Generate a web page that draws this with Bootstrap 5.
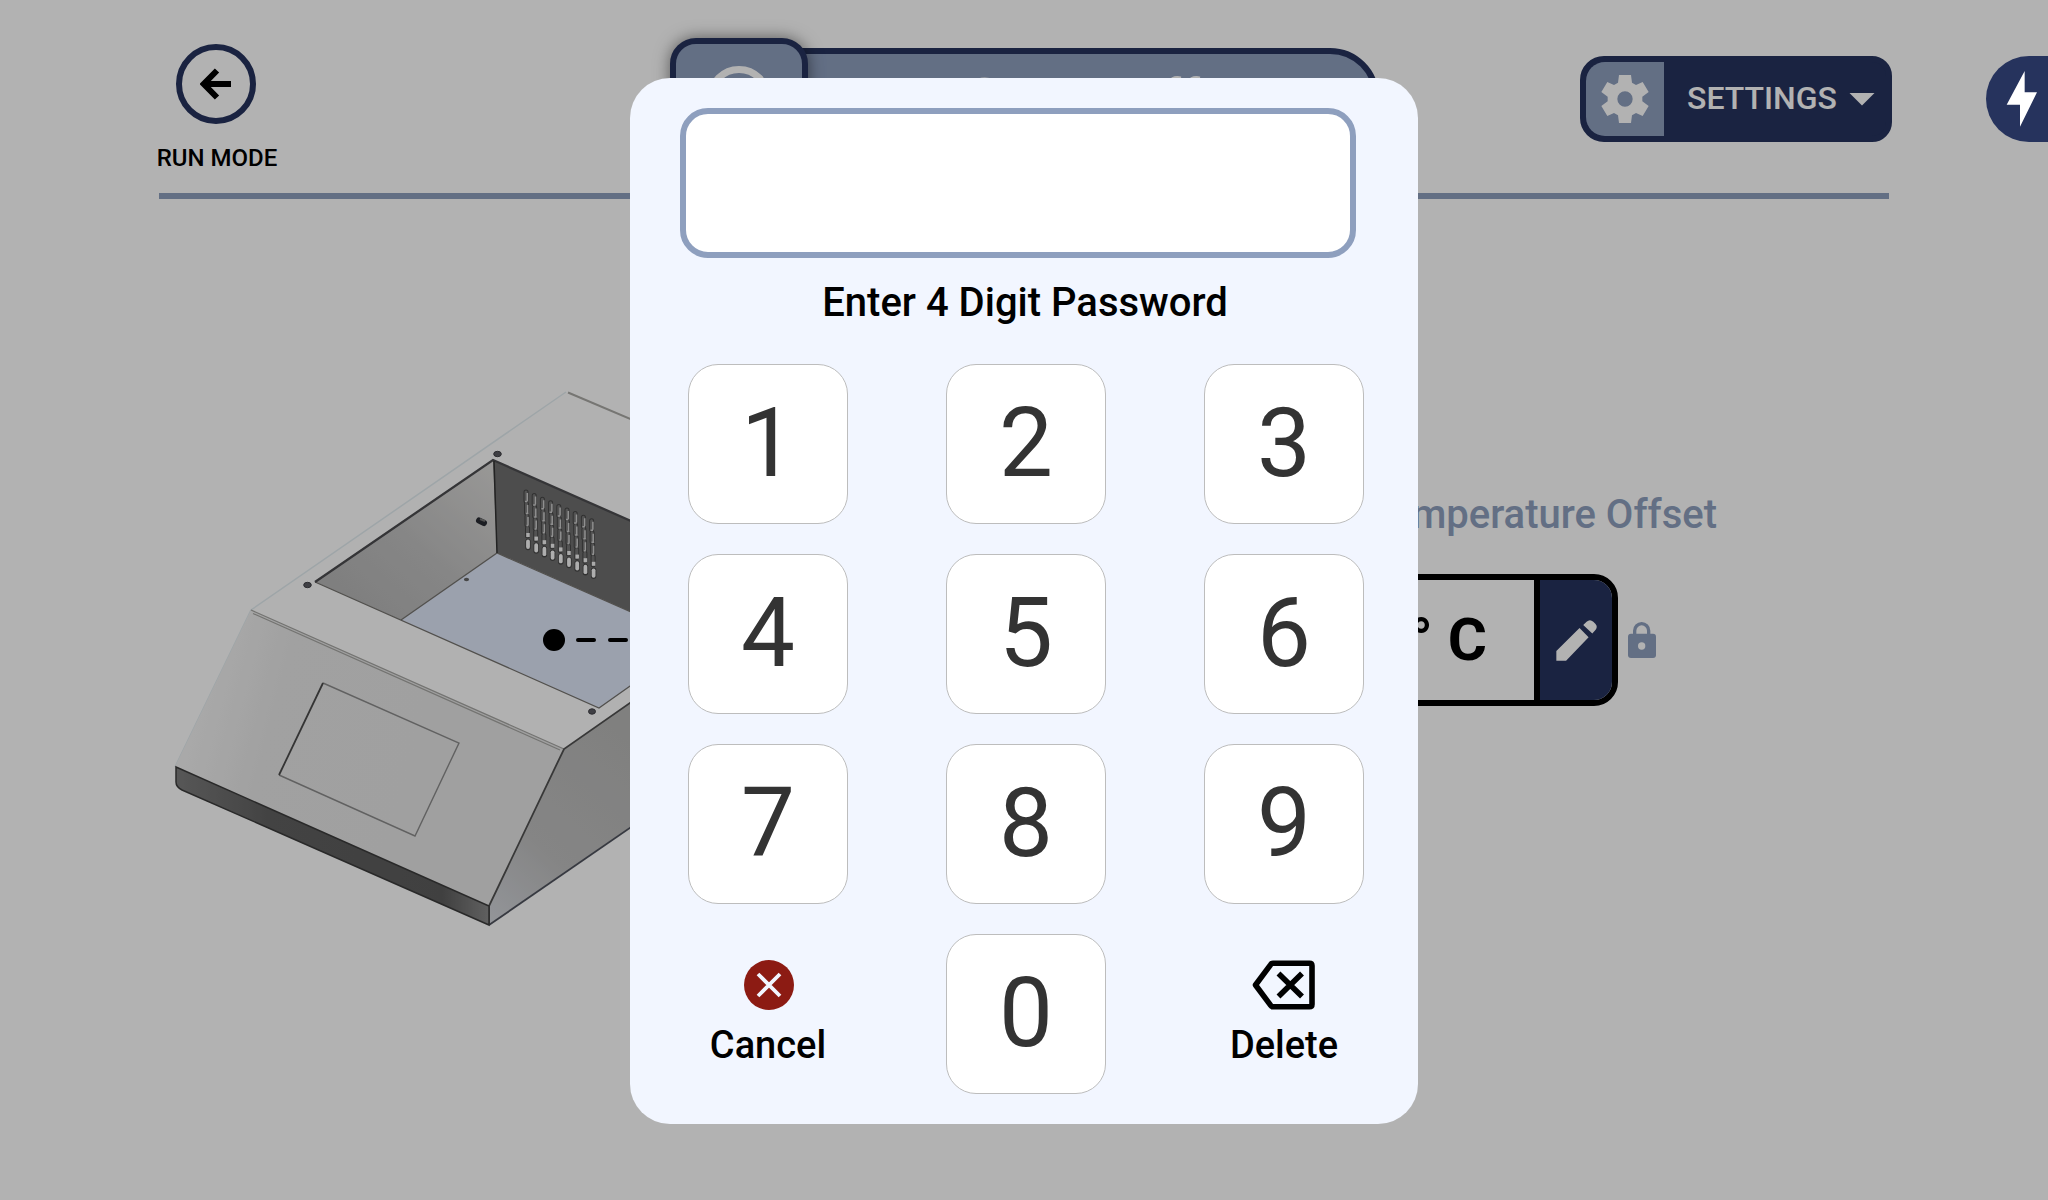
<!DOCTYPE html>
<html lang="en">
<head>
<meta charset="utf-8">
<meta name="viewport" content="width=device-width, initial-scale=1">
<title>Temperature Offset</title>
<link href="https://cdn.jsdelivr.net/npm/bootstrap@5.3.0/dist/css/bootstrap.min.css" rel="stylesheet">
<style>
  :root { --navy: #26335d; --slate: #8e9fbe; --panel: #f2f6ff; }
  body { font-family: Roboto, "Liberation Sans", sans-serif; color: #000; background: #fff; width: 2048px; height: 1200px; font-weight: 500; }
  svg { display: block; flex: none; }
  .topbar { margin: 0 159px; height: 199px; border-bottom: 6px solid var(--slate); }
  .run-mode { width: 120px; margin: 44px 0 0 -3px; }
  .run-ring { width: 80px; height: 80px; border: 6px solid var(--navy); }
  .run-label { font-size: 24px; line-height: 28px; margin: 20px 0 0 2px; white-space: nowrap; }
  .title-group { margin: 38px 0 0 394px; width: 709px; }
  .title-tab { width: 138px; height: 118px; border: 6px solid var(--navy); border-radius: 26px; background: var(--slate); box-shadow: 0 0 16px rgba(0,0,0,.5); z-index: 1; padding-top: 22px; }
  .title-pill { height: 98px; margin: 10px 0 0 -40px; border: 6px solid var(--navy); border-radius: 0 49px 49px 0; background: var(--slate); color: #fff; line-height: 60px; padding: 15px 0 0 191px; }
  .title-initial { font-size: 58px; width: 38px; }
  .title-tail { font-size: 54px; margin-left: 159px; }
  .settings { width: 312px; height: 86px; margin: 56px -3px 0 auto; background: var(--navy); border: 6px solid var(--navy); border-radius: 24px 20px 20px 24px; color: #fff; font-size: 32px; line-height: 38px; }
  .settings-icon { width: 78px; height: 74px; background: var(--slate); border-radius: 19px 0 0 19px; }
  .settings-label { margin: 0 12px 0 23px; padding-bottom: 2px; }
  .device { margin: 181px 0 0 160px; }
  .reading { margin: 292px 0 0 700px; }
  .reading-title { width: 377px; font-size: 40px; line-height: 48px; color: var(--slate); text-align: right; white-space: nowrap; }
  .reading-row { margin-top: 35px; gap: 10px; }
  .value-box { width: 278px; height: 132px; border: 6px solid #000; border-radius: 24px; overflow: hidden; }
  .value-text { font-size: 60px; font-weight: 700; padding-right: 47px; white-space: pre; }
  .value-edit { width: 78px; border-left: 6px solid #000; background: var(--navy); }
  .shade { background: rgba(0,0,0,.3); padding-top: 78px; z-index: 1050; }
  .keypad { width: 788px; height: 1046px; background: var(--panel); border-radius: 40px; padding: 30px 54px 30px 58px; }
  .pin-box { width: 676px; height: 150px; margin-left: -8px; border: 6px solid var(--slate); border-radius: 28px; background: #fff; }
  .prompt { font-size: 40px; line-height: 48px; margin: 21px 0 37px -2px; }
  .keys { display: grid; grid-template-columns: repeat(3, 160px); grid-auto-rows: 160px; gap: 30px 98px; }
  .key { background: #fff; border: 1px solid #bdbdbd; border-radius: 30px; padding: 0 0 2px; color: #333; font-size: 96px; font-weight: 400; line-height: 156px; }
  .action { border: 0; background: none; padding: 26px 0 0; color: #000; font-size: 38px; font-weight: 500; line-height: 44px; }
  .action svg { margin-bottom: 13px; }
  .bolt-tab { top: 56px; right: 0; width: 62px; height: 86px; background: var(--navy); border-radius: 43px 0 0 43px; z-index: 1060; }
</style>
</head>
<body class="overflow-hidden position-relative">

<header class="topbar d-flex align-items-start">
  <div class="run-mode d-flex flex-column align-items-center">
    <div class="run-ring rounded-circle d-flex align-items-center justify-content-center">
      <svg width="32" height="32" viewBox="0 0 32 32" fill="none" stroke="#000" stroke-width="6"><path d="M31 16H5M17 2.500 3.800 16 17 29.500"/></svg>
    </div>
    <div class="run-label">RUN MODE</div>
  </div>
  <div class="title-group d-flex align-items-start">
    <div class="title-tab position-relative flex-shrink-0 d-flex justify-content-center">
      <svg width="64" height="64" viewBox="0 0 64 64" fill="none" stroke="#fff" stroke-width="7"><circle cx="32" cy="32" r="28.500"/></svg>
    </div>
    <div class="title-pill flex-grow-1 d-flex align-items-start"><span class="title-initial">C</span><span class="title-tail">ff</span></div>
  </div>
  <div class="settings d-flex align-items-center">
    <div class="settings-icon d-flex align-items-center justify-content-center">
      <svg width="48" height="48" viewBox="-72 -72 144 144"><path fill="#fff" fill-rule="evenodd" d="M-18-72H18L21-49 33-42 53-51 71-21 52-7V7L71 21 53 51 33 42 21 49 18 72H-18L-21 49-33 42-53 51-71 21-52 7V-7L-71-21-53-51-33-42-21-49ZM0-23A23 23 0 1 0 0 23A23 23 0 1 0 0-23Z"/></svg>
    </div>
    <span class="settings-label">SETTINGS</span>
    <svg width="26" height="13" viewBox="0 0 26 13"><path fill="#fff" d="M.5 0h25L13 12.500z"/></svg>
  </div>
</header>

<main class="d-flex align-items-start">
  <svg class="device" width="480" height="560" viewBox="160 380 480 560">
    <defs>
      <linearGradient id="wall" x1="0" y1="1" x2="1" y2="0"><stop offset="0" stop-color="#b2b2b2"/><stop offset=".5" stop-color="#c0c0c0"/><stop offset="1" stop-color="#dcdbd9"/></linearGradient>
      <linearGradient id="face" x1="0" y1=".3" x2="1" y2=".5"><stop offset="0" stop-color="#f6f6f6"/><stop offset=".25" stop-color="#e7e7e7"/><stop offset="1" stop-color="#e5e5e5"/></linearGradient>
      <linearGradient id="side" x1="0" y1="1" x2=".6" y2="0"><stop offset="0" stop-color="#d3d6dc"/><stop offset=".4" stop-color="#bfbfbf"/><stop offset="1" stop-color="#b8b8b7"/></linearGradient>
      <linearGradient id="base"><stop offset="0" stop-color="#7d7d7d"/><stop offset=".3" stop-color="#606060"/><stop offset=".85" stop-color="#5c5c5c"/><stop offset="1" stop-color="#8a8a8a"/></linearGradient>
      <g id="vents">
        <path d="M526 492v9M526.500 504v9M527 516v9M527.500 528v8" stroke="#474747" stroke-width="5" stroke-linecap="round"/>
        <path d="M526 492v9M526.500 504v9M527 516v9M527.500 528v8" stroke="#777" stroke-width="3" stroke-linecap="round"/>
        <path d="M527.300 493v8M525 501.500h2.500M527.600 505v8M526 513.500h2.500M528 517v8M526.500 525.500h2" stroke="#cfcfcf" stroke-width="1.500"/>
        <path d="M528 533v4" stroke="#f4f4f4" stroke-width="3.500"/>
        <path d="M528 541.500v6" stroke="#474747" stroke-width="5.500" stroke-linecap="round"/>
        <path d="M528 541.500v5.500" stroke="#fafafa" stroke-width="3.800" stroke-linecap="round"/>
      </g>
    </defs>
    <path fill="#fefefe" d="M566 392 251 610 564 749 640 697V423z"/>
    <path fill="none" stroke="#e3edf1" stroke-width="1.500" d="M566 392 251 610 175 767"/>
    <path fill="none" stroke="#aaa9a5" stroke-width="2" d="M568 392.500 640 423"/>
    <path fill="url(#wall)" d="M315 582 493 460 497 553 401 620z"/>
    <path fill="#6f6f6f" d="M493 460 640 525V616L497 553z"/>
    <path fill="#dfe7f8" d="M401 620 497 553 640 616V680L599 708z"/>
    <path fill="none" stroke="#75736f" stroke-width="1.300" d="M401 620 497 553 640 616M315 582 599 708 640 679"/>
    <path fill="none" stroke="#4c4c50" stroke-width="2.300" d="M315 582 493 460 640 525"/>
    <path stroke="#333" stroke-width="1.500" d="M494 461 497 553"/>
    <use href="#vents"/><use href="#vents" x="8.200" y="3.600"/><use href="#vents" x="16.400" y="7.200"/><use href="#vents" x="24.600" y="10.800"/><use href="#vents" x="32.800" y="14.400"/><use href="#vents" x="41" y="18"/><use href="#vents" x="49.200" y="21.600"/><use href="#vents" x="57.400" y="25.200"/><use href="#vents" x="65.600" y="28.800"/>
    <path stroke="#292b33" stroke-width="6" stroke-linecap="round" d="M479 520.500 484 523"/><path stroke="#777" stroke-width="2" d="M480 519 485 521"/>
    <ellipse cx="466.500" cy="579.500" rx="2.600" ry="1.800" fill="#666"/>
    <g fill="#5b5b62" stroke="#404046"><ellipse cx="497.500" cy="454" rx="3.800" ry="2.700"/><ellipse cx="307.500" cy="585" rx="3.800" ry="2.700"/><ellipse cx="592" cy="711.500" rx="3.500" ry="2.700"/></g>
    <path fill="url(#face)" d="M251 610 564 749 489 906 175 767z"/>
    <path fill="none" stroke="#a6a6a3" stroke-width="1.200" d="M251 610 564 749M253 613.500 560 750"/>
    <path fill="url(#side)" d="M564 749 640 696V821L489 925V906z"/>
    <path fill="none" stroke="#515151" stroke-width="1.800" d="M640 696 564 749 489 906V924"/>
    <path fill="none" stroke="#50535e" stroke-width="1.800" d="M489 925 640 821"/>
    <path fill="url(#base)" stroke="#3c3c3c" stroke-width="1.500" d="M176 767 489 906V925L182 790Q176 787 176 782z"/>
    <path fill="none" stroke="#8c8c8c" stroke-width="1.400" d="M323 683 459 743 415 836 279 775"/>
    <path stroke="#4b4b4b" stroke-width="1.800" d="M323 683 279 775"/>
    <circle cx="554" cy="640" r="11"/>
    <path stroke="#000" stroke-width="4" stroke-linecap="round" d="M578 640h16M610 640h16"/>
  </svg>

  <section class="reading">
    <div class="reading-title">Temperature Offset</div>
    <div class="reading-row d-flex align-items-center">
      <div class="value-box d-flex">
        <div class="value-text flex-grow-1 d-flex align-items-center justify-content-end">° C</div>
        <div class="value-edit d-flex align-items-center justify-content-center">
          <svg width="41" height="41" viewBox="527 419 122 122"><path fill="#fff" d="M528 540V511L597 443 624 470 557 540zM608 434 618 424Q628 415 638 424L644 430Q652 438 645 448L635 459z"/></svg>
        </div>
      </div>
      <svg width="28" height="36" viewBox="744 426 84 108"><rect x="744" y="461" width="84" height="73" rx="9" fill="#8e9fbe"/><path d="M764 463V452a21 21 0 0 1 42 0V463" fill="none" stroke="#8e9fbe" stroke-width="10"/><circle cx="785" cy="498" r="11" fill="#fff"/></svg>
    </div>
  </section>
</main>

<div class="shade position-fixed top-0 start-0 w-100 h-100 d-flex justify-content-center align-items-start">
  <div class="keypad" role="dialog" aria-label="Password">
    <div class="pin-box"></div>
    <div class="prompt text-center">Enter 4 Digit Password</div>
    <div class="keys">
      <button class="key">1</button><button class="key">2</button><button class="key">3</button>
      <button class="key">4</button><button class="key">5</button><button class="key">6</button>
      <button class="key">7</button><button class="key">8</button><button class="key">9</button>
      <button class="action d-flex flex-column align-items-center">
        <svg width="52" height="50" viewBox="-2 0 52 50"><circle cx="25" cy="25" r="25" fill="#8c1b13"/><path d="M14 14 36 36M36 14 14 36" stroke="#f2f6ff" stroke-width="3.800"/></svg>Cancel
      </button>
      <button class="key">0</button>
      <button class="action d-flex flex-column align-items-center">
        <svg width="65" height="50" viewBox="0 0 65 50" fill="none" stroke="#000" stroke-width="5.600"><path stroke-linejoin="round" d="M21 3.300H57.500Q60 3.300 60 5.800V44.200Q60 46.700 57.500 46.700H21Q19.500 46.700 18.500 45.200L3.500 25 18.500 4.800Q19.500 3.300 21 3.300z"/><path d="M26.500 13.500 50 36.500M50 13.500 26.500 36.500"/></svg>Delete
      </button>
    </div>
  </div>
</div>

<div class="bolt-tab position-absolute">
  <svg width="62" height="86" viewBox="1278 48 186 258"><path fill="#fff" d="M1394 93V157H1431L1380 260V194H1340z"/></svg>
</div>

<script src="https://cdn.jsdelivr.net/npm/bootstrap@5.3.0/dist/js/bootstrap.bundle.min.js"></script>
</body>
</html>
